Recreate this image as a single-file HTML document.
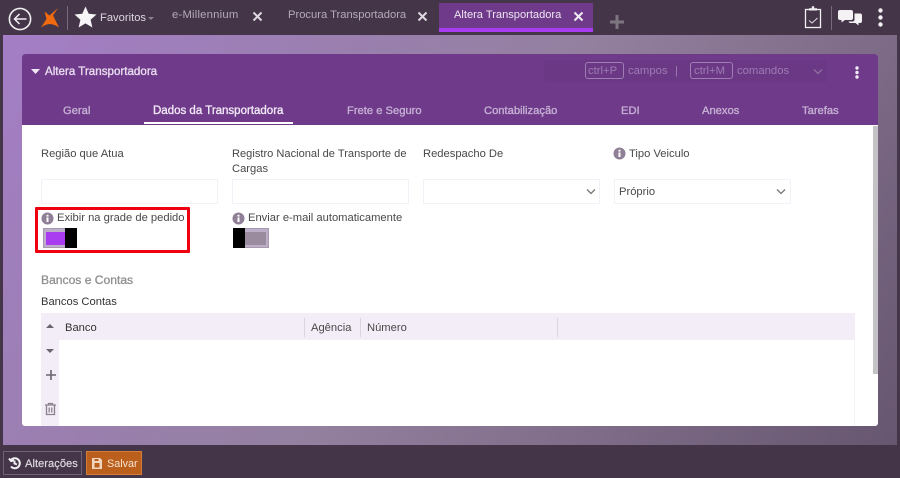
<!DOCTYPE html>
<html><head><meta charset="utf-8">
<style>
html,body{margin:0;padding:0;width:900px;height:478px;overflow:hidden;background:#443648;font-family:"Liberation Sans",sans-serif;}
.a{position:absolute;white-space:nowrap;line-height:14px;}
.l{font-size:11.2px;color:#484848;}
.i{position:absolute;box-sizing:border-box;background:#fff;border:1px solid #f3f1f8;height:25px;}
.tab{font-size:11.2px;color:#c5b0d3;-webkit-text-stroke:.35px #c5b0d3;}
.k{font-size:11.3px;color:#9f7cb3;}
svg{position:absolute;overflow:visible;}
</style></head><body>
<div style="position:absolute;left:3px;top:35px;width:894px;height:410px;background:linear-gradient(125deg,#a47ec6 0%,#93809f 50%,#67566f 100%);"></div>

<!-- top bar -->
<svg style="left:8px;top:7px" width="24" height="24" viewBox="0 0 24 24" fill="none" stroke="#f1eef2"><circle cx="12" cy="12" r="10.6" stroke-width="1.600"/><path d="M18.500 12H6.500M11.500 7l-5 5 5 5" stroke-width="1.500"/></svg>
<svg style="left:41px;top:8px" width="18" height="20" viewBox="0 0 18 20"><path d="M17 0L12 7.500 18 19.500Q13 16 8.500 16Q4 16.500 0 19.500L5.500 11 3.500 3.500 8.500 7.500Z" fill="#f26a10"/></svg>
<div style="position:absolute;left:67px;top:6px;width:1px;height:24px;background:#776b7c;"></div>
<svg style="left:74px;top:6px" width="23" height="22" viewBox="0 0 23 22"><path d="M11.500 0.500L14.700 7.800 22.500 8.500 16.600 13.700 18.400 21.500 11.500 17.400 4.600 21.500 6.400 13.700 0.500 8.500 8.300 7.800Z" fill="#f7f5f8"/></svg>
<div class="a" style="left:100px;top:11px;font-size:11.2px;color:#ddd7e0;">Favoritos</div>
<svg style="left:148px;top:17px" width="6" height="3"><path d="M0 0H6L3 3Z" fill="#8d8290"/></svg>
<div class="a" style="left:172px;top:8px;font-size:11.3px;color:#b5abb9;letter-spacing:.2px;">e-Millennium</div>
<svg style="left:253px;top:12px" width="9" height="9" fill="none" stroke="#ddd8df" stroke-width="2"><path d="M.5 .5L8.500 8.500M8.500 .5L.5 8.500"/></svg>
<div class="a" style="left:288px;top:8px;font-size:11.2px;color:#b5abb9;">Procura Transportadora</div>
<svg style="left:418px;top:12px" width="9" height="9" fill="none" stroke="#ddd8df" stroke-width="2"><path d="M.5 .5L8.500 8.500M8.500 .5L.5 8.500"/></svg>
<div style="position:absolute;left:439px;top:3px;width:154px;height:25px;background:#6f3a8a;border-bottom:4px solid #a93bf0;"></div>
<div class="a" style="left:454px;top:8px;font-size:11.1px;color:#eee6f2;">Altera Transportadora</div>
<svg style="left:574px;top:12px" width="9" height="9" fill="none" stroke="#f0ecf2" stroke-width="2"><path d="M.5 .5L8.500 8.500M8.500 .5L.5 8.500"/></svg>
<svg style="left:610px;top:15px" width="14" height="14"><path d="M5.500 0h3v5.500H14v3H8.500V14h-3V8.500H0v-3h5.500z" fill="#7d7680"/></svg>
<svg style="left:804px;top:6px" width="18" height="23" viewBox="0 0 18 23" fill="none" stroke="#f2eff3"><rect x="1.500" y="3.500" width="15" height="18" stroke-width="1.300"/><path d="M5 4.500V2.200H7.800V.3h2.400V2.200H13V4.500Z" fill="#f2eff3" stroke="none"/><path d="M5 14.500l3 2.500 5.500-5" stroke-width="1.100" stroke="#d8d2da"/></svg>
<div style="position:absolute;left:831px;top:6px;width:1px;height:24px;background:#766a7b;"></div>
<svg style="left:838px;top:10px" width="24" height="16" viewBox="0 0 24 16"><path d="M2 0H13a2 2 0 0 1 2 2V8a2 2 0 0 1-2 2H7L3.500 12.500V10H2A2 2 0 0 1 0 8V2A2 2 0 0 1 2 0Z" fill="#f4f2f5"/><path d="M16.500 3.500H22a2 2 0 0 1 2 2V11a2 2 0 0 1-2 2H20.500V15.500L17.500 13H12a2 2 0 0 1-1.500-1.500H15a2 2 0 0 0 1.500-2Z" fill="#f4f2f5"/></svg>
<svg style="left:877px;top:8px" width="7" height="19" fill="#f4f2f5"><circle cx="3.500" cy="2.500" r="2.200"/><circle cx="3.500" cy="9.500" r="2.200"/><circle cx="3.500" cy="16.500" r="2.200"/></svg>

<!-- card -->
<div style="position:absolute;left:22px;top:54px;width:856px;height:372px;background:#fff;border-radius:3px;overflow:hidden;">
<div style="position:absolute;left:0;top:0;width:856px;height:71px;background:#6f3a8a;"></div>
<div style="position:absolute;left:851px;top:72px;width:5px;height:248px;background:#c4c2c5;"></div>
</div>
<svg style="left:31px;top:69px" width="9" height="5"><path d="M0 0H9L4.500 5Z" fill="#f0e8f4"/></svg>
<div class="a" style="left:45px;top:65px;font-size:11.6px;color:#e8dcef;-webkit-text-stroke:.35px #e8dcef;">Altera Transportadora</div>
<div style="position:absolute;left:544px;top:60px;width:283px;height:22px;background:#6a3884;border-radius:3px;"></div>
<div style="position:absolute;left:585px;top:62px;width:39px;height:17px;box-sizing:border-box;border:1px solid #9f7cb3;border-radius:3px;"></div>
<div class="a k" style="left:588px;top:64px;">ctrl+P</div>
<div class="a k" style="left:628px;top:64px;">campos</div>
<div class="a k" style="left:675px;top:64px;">|</div>
<div style="position:absolute;left:690px;top:62px;width:43px;height:17px;box-sizing:border-box;border:1px solid #9f7cb3;border-radius:3px;"></div>
<div class="a k" style="left:694px;top:64px;">ctrl+M</div>
<div class="a k" style="left:737px;top:64px;">comandos</div>
<svg style="left:813px;top:69px" width="10" height="6" fill="none" stroke="#8d6aa0" stroke-width="1.500"><path d="M1 .5L5 4.500 9 .5"/></svg>
<svg style="left:854px;top:66px" width="6" height="13"><circle cx="3" cy="2" r="1.700" fill="#f1eaf5"/><circle cx="3" cy="6.500" r="1.700" fill="#f1eaf5"/><circle cx="3" cy="11" r="1.700" fill="#f1eaf5"/></svg>

<div class="a tab" style="left:63px;top:104px;">Geral</div>
<div class="a tab" style="left:153px;top:104px;font-size:11.5px;color:#f0e8f4;-webkit-text-stroke:.35px #f0e8f4;">Dados da Transportadora</div>
<div style="position:absolute;left:144px;top:122px;width:149px;height:2px;background:#fff;"></div>
<div class="a tab" style="left:347px;top:104px;">Frete e Seguro</div>
<div class="a tab" style="left:484px;top:104px;">Contabilização</div>
<div class="a tab" style="left:621px;top:104px;">EDI</div>
<div class="a tab" style="left:702px;top:104px;">Anexos</div>
<div class="a tab" style="left:802px;top:104px;">Tarefas</div>

<!-- form -->
<div class="a l" style="left:41px;top:147px;">Região que Atua</div>
<div class="a l" style="left:232px;top:147px;font-size:11.1px;">Registro Nacional de Transporte de</div>
<div class="a l" style="left:232px;top:162px;">Cargas</div>
<div class="a l" style="left:423px;top:147px;">Redespacho De</div>
<svg style="left:613px;top:147px" width="13" height="13"><circle cx="6.500" cy="6.500" r="6" fill="#8f8097"/><rect x="5.500" y="5.500" width="2" height="4.500" fill="#fff"/><rect x="5.500" y="2.800" width="2" height="1.800" fill="#fff"/></svg>
<div class="a l" style="left:629px;top:147px;">Tipo Veiculo</div>

<div class="i" style="left:41px;top:179px;width:177px;"></div>
<div class="i" style="left:232px;top:179px;width:177px;"></div>
<div class="i" style="left:423px;top:179px;width:177px;"></div>
<svg style="left:586px;top:189px" width="10" height="6" fill="none" stroke="#777" stroke-width="1.300"><path d="M1 .5L5 4.500 9 .5"/></svg>
<div class="i" style="left:614px;top:179px;width:177px;"></div>
<div class="a l" style="left:619px;top:185px;">Próprio</div>
<svg style="left:776px;top:189px" width="10" height="6" fill="none" stroke="#777" stroke-width="1.300"><path d="M1 .5L5 4.500 9 .5"/></svg>

<div style="position:absolute;left:35px;top:207px;width:155px;height:46px;box-sizing:border-box;border:3px solid #ee0011;border-radius:1px;"></div>
<svg style="left:41px;top:212px" width="13" height="13"><circle cx="6.500" cy="6.500" r="6" fill="#8f8097"/><rect x="5.500" y="5.500" width="2" height="4.500" fill="#fff"/><rect x="5.500" y="2.800" width="2" height="1.800" fill="#fff"/></svg>
<div class="a l" style="left:57px;top:211px;">Exibir na grade de pedido</div>
<div style="position:absolute;left:43px;top:228px;width:34px;height:20px;box-sizing:border-box;background:#bcaec6;border:1px solid #a898b0;"></div>
<div style="position:absolute;left:46px;top:232px;width:20px;height:13px;background:#a93bf0;"></div>
<div style="position:absolute;left:65px;top:228px;width:12px;height:20px;background:#000;"></div>

<svg style="left:232px;top:212px" width="13" height="13"><circle cx="6.500" cy="6.500" r="6" fill="#8f8097"/><rect x="5.500" y="5.500" width="2" height="4.500" fill="#fff"/><rect x="5.500" y="2.800" width="2" height="1.800" fill="#fff"/></svg>
<div class="a l" style="left:248px;top:211px;">Enviar e-mail automaticamente</div>
<div style="position:absolute;left:234px;top:228px;width:35px;height:20px;box-sizing:border-box;background:#bcaec6;border:1px solid #a898b0;"></div>
<div style="position:absolute;left:245px;top:232px;width:21px;height:13px;background:#9b8b9f;"></div>
<div style="position:absolute;left:233px;top:228px;width:12px;height:20px;background:#000;"></div>

<div class="a" style="left:41px;top:273px;font-size:12.1px;color:#8f8f8f;-webkit-text-stroke:.3px #8f8f8f;">Bancos e Contas</div>
<div class="a l" style="left:41px;top:295px;color:#333;">Bancos Contas</div>

<!-- grid -->
<div style="position:absolute;left:41px;top:313px;width:814px;height:27px;background:#f3edf8;"></div>
<div style="position:absolute;left:41px;top:340px;width:18px;height:86px;background:#f3edf8;"></div>
<div style="position:absolute;left:854px;top:340px;width:1px;height:86px;background:#f5f2f8;"></div>
<div style="position:absolute;left:304px;top:318px;width:1px;height:19px;background:#dcd4e2;"></div>
<div style="position:absolute;left:360px;top:318px;width:1px;height:19px;background:#dcd4e2;"></div>
<div style="position:absolute;left:557px;top:318px;width:1px;height:19px;background:#dcd4e2;"></div>
<div class="a l" style="left:65px;top:321px;color:#333;">Banco</div>
<div class="a l" style="left:311px;top:321px;">Agência</div>
<div class="a l" style="left:367px;top:321px;">Número</div>
<svg style="left:46px;top:324px" width="8" height="4"><path d="M0 4H8L4 0Z" fill="#6b6470"/></svg>
<svg style="left:46px;top:349px" width="8" height="4"><path d="M0 0H8L4 4Z" fill="#6b6470"/></svg>
<svg style="left:46px;top:370px" width="10" height="10"><path d="M4.200 0h1.600v4.200H10v1.600H5.800V10H4.200V5.800H0V4.200h4.200z" fill="#6b6470"/></svg>
<svg style="left:45px;top:403px" width="11" height="12" fill="none" stroke="#8a838f" stroke-width="1.300"><path d="M0 2H11M3.500 2V.5h4V2M1.500 2.500V11.500H9.500V2.500M4.200 4.500V9.500M6.800 4.500V9.500"/></svg>

<!-- bottom -->
<div style="position:absolute;left:3px;top:451px;width:79px;height:24px;box-sizing:border-box;border:1px solid #6e6273;background:#443648;"></div>
<svg style="left:8px;top:457px" width="13" height="12" fill="none" stroke="#f2eff3" stroke-width="2"><path d="M3 3A5 5 0 1 1 3 9.500M1 1.500L3 4 6 3.500M6.500 3.500V6.500L9 7.500"/></svg>
<div class="a" style="left:25px;top:457px;font-size:11.2px;color:#e0dbe3;-webkit-text-stroke:.15px #e0dbe3;">Alterações</div>
<div style="position:absolute;left:86px;top:451px;width:56px;height:24px;box-sizing:border-box;border:1px solid #d27c39;background:#bb5f1c;"></div>
<svg style="left:92px;top:458px" width="10" height="11"><path d="M0 0H8L10 2V11H0Z" fill="#f0d6bf"/><rect x="2.500" y="5" width="5" height="4.500" fill="#bb5f1c"/><rect x="2.500" y="1" width="4" height="2" fill="#bb5f1c"/></svg>
<div class="a" style="left:107px;top:457px;font-size:10.8px;color:#f6e2d0;">Salvar</div>
</body></html>
